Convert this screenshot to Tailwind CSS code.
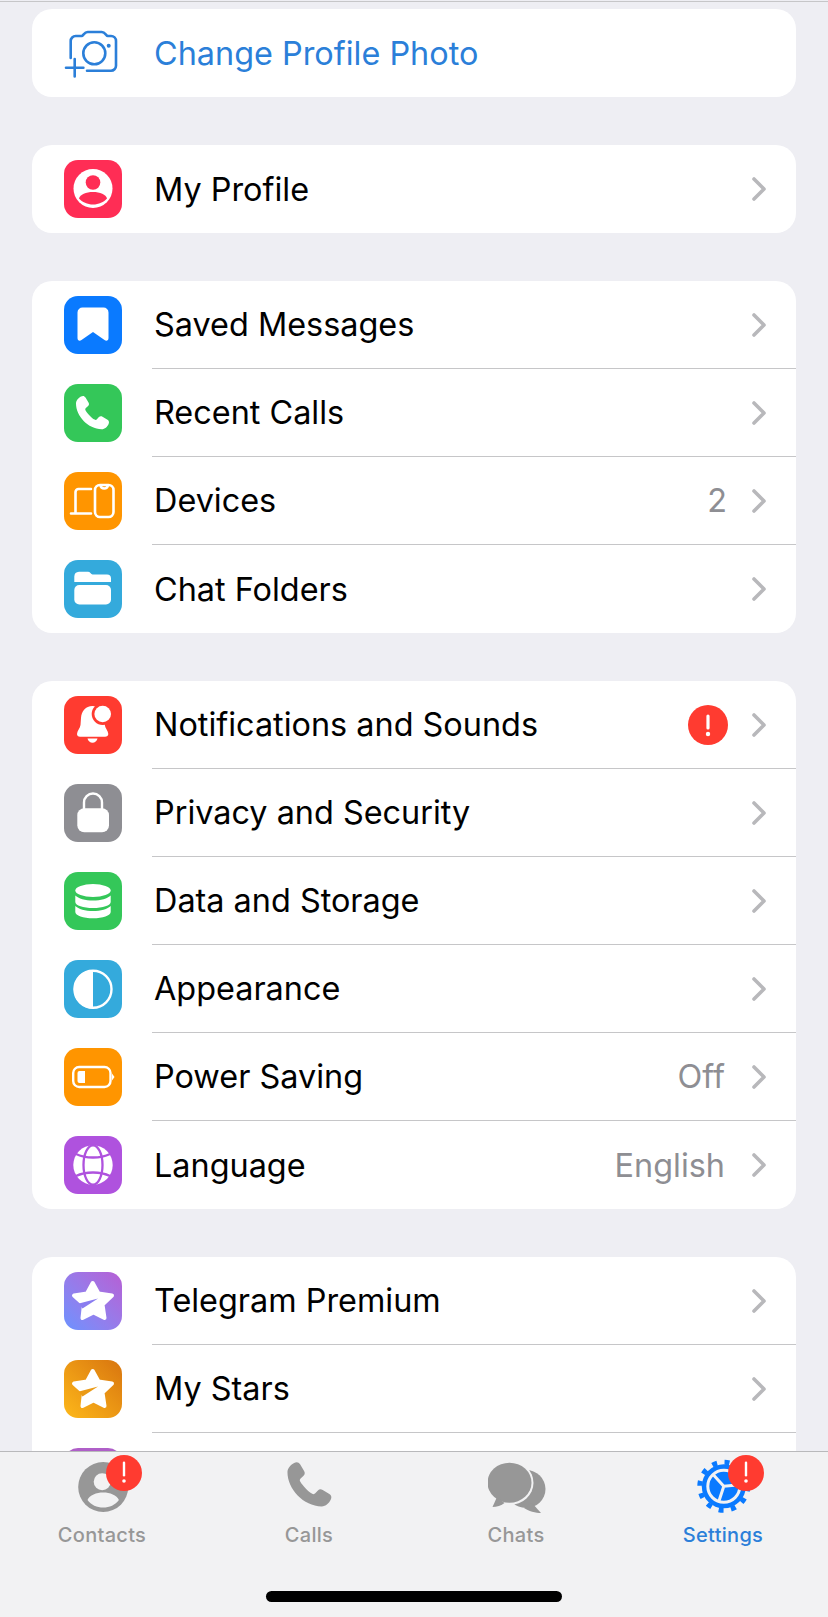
<!DOCTYPE html>
<html lang="en">
<head>
    <meta charset="UTF-8">
    <meta name="viewport" content="width=device-width, initial-scale=1.0">
    <title>Settings</title>
    <script src="https://cdn.jsdelivr.net/npm/@tailwindcss/browser@4"></script>
</head>
<body class="w-[828px] h-[1617px] overflow-hidden flex flex-col bg-[#eeeef3] font-[Inter,sans-serif] text-[32.4px] text-black">

    <main class="h-[1451px] overflow-hidden pt-px">
        <div class="border-t border-[#c6c6c8] h-[8px]"></div>
        <div class="flex flex-col gap-12 px-8">

            <!-- change photo -->
            <section class="bg-white rounded-[20px]">
                <div class="h-[88px] flex items-center pl-8">
                    <svg class="w-[58px] h-[58px] shrink-0" viewBox="0 0 58 58" fill="none" stroke="#2b7fd9" stroke-width="2.6" stroke-linecap="round">
                        <path d="M6.7 34V17a5 5 0 0 1 5-5h6c1.500 0 2.500-4 6-4h14c3.500 0 4.500 4 6 4h3.300a5 5 0 0 1 5 5v24.700a5 5 0 0 1-5 5H23"/>
                        <circle cx="30.300" cy="29.300" r="11"/>
                        <circle cx="44.700" cy="21.700" r="2" fill="#2b7fd9" stroke="none"/>
                        <path d="M10.700 35v17.400M2 43.700h17.400"/>
                    </svg>
                    <span class="ml-8 pt-[2px] text-[#2b7fd9]">Change Profile Photo</span>
                </div>
            </section>

            <!-- profile -->
            <section class="bg-white rounded-[20px]">
                <div class="h-[88px] flex items-center pl-8">
                    <div class="w-[58px] h-[58px] shrink-0 rounded-[14px] bg-[#ff2d55]">
                        <svg viewBox="0 0 58 58" class="w-full h-full">
                            <circle cx="29" cy="28.500" r="19.500" fill="#fff"/>
                            <circle cx="29" cy="22.500" r="7.300" fill="#ff2d55"/>
                            <path d="M15 38.500c1-4 7-6.500 14-6.500s13 2.500 14 6.500c-3 3.500-8.500 6-14 6s-11-2.500-14-6z" fill="#ff2d55"/>
                        </svg>
                    </div>
                    <div class="flex-1 h-full ml-[30px] pl-[2px] pr-[30px] flex items-center">
                        <span class="flex-1 pt-[2px]">My Profile</span>
                        <svg class="w-[14px] h-[24px]" viewBox="0 0 14 24" fill="none" stroke="#b8b8bb" stroke-width="3.600" stroke-linecap="round" stroke-linejoin="round"><path d="M2 2l10 10L2 22"/></svg>
                    </div>
                </div>
            </section>

            <!-- saved, calls, devices, folders -->
            <section class="bg-white rounded-[20px]">
                <div class="h-[88px] flex items-center pl-8">
                    <div class="w-[58px] h-[58px] shrink-0 rounded-[14px] bg-[#0a7aff]">
                        <svg viewBox="0 0 58 58" class="w-full h-full">
                            <path d="M18.500 11.500h21a5 5 0 0 1 5 5V42c0 2.500-2 3.500-4 2l-11.500-8-11.500 8c-2 1.500-4 .5-4-2V16.500a5 5 0 0 1 5-5z" fill="#fff"/>
                        </svg>
                    </div>
                    <div class="flex-1 h-full ml-[30px] pl-[2px] pr-[30px] flex items-center border-b border-[#c6c6c8]">
                        <span class="flex-1 pt-[2px]">Saved Messages</span>
                        <svg class="w-[14px] h-[24px]" viewBox="0 0 14 24" fill="none" stroke="#b8b8bb" stroke-width="3.600" stroke-linecap="round" stroke-linejoin="round"><path d="M2 2l10 10L2 22"/></svg>
                    </div>
                </div>
                <div class="h-[88px] flex items-center pl-8">
                    <div class="w-[58px] h-[58px] shrink-0 rounded-[14px] bg-[#34c759]">
                        <svg viewBox="0 0 58 58" class="w-full h-full">
                            <path d="M17 12.500c2-1 3.500-.5 4.500 1l3 5c.8 1.400.6 2.600-.4 3.600l-2.200 2c-.7.7-.8 1.400-.3 2.300 1.800 3.200 5.800 7.400 9 9.200.9.5 1.700.4 2.300-.3l2-2.200c1-1 2.200-1.200 3.600-.4l5 3c1.500 1 2 2.500 1 4.500-1.200 2.400-3.600 5-6.800 5C24 45 12 32 12 19.500c0-3.200 2.600-5.800 5-7z" fill="#fff"/>
                        </svg>
                    </div>
                    <div class="flex-1 h-full ml-[30px] pl-[2px] pr-[30px] flex items-center border-b border-[#c6c6c8]">
                        <span class="flex-1 pt-[2px]">Recent Calls</span>
                        <svg class="w-[14px] h-[24px]" viewBox="0 0 14 24" fill="none" stroke="#b8b8bb" stroke-width="3.600" stroke-linecap="round" stroke-linejoin="round"><path d="M2 2l10 10L2 22"/></svg>
                    </div>
                </div>
                <div class="h-[88px] flex items-center pl-8">
                    <div class="w-[58px] h-[58px] shrink-0 rounded-[14px] bg-[#ff9500]">
                        <svg viewBox="0 0 58 58" class="w-full h-full" fill="none" stroke="#fff" stroke-width="2.600" stroke-linecap="round" stroke-linejoin="round">
                            <path d="M27 17H14.500a3 3 0 0 0-3 3v21M7 41.500h20"/>
                            <rect x="31" y="13" width="18.500" height="32" rx="5"/>
                            <path d="M36.500 13.500c.5 2.500 1.500 3 3.700 3s3.200-.5 3.700-3"/>
                        </svg>
                    </div>
                    <div class="flex-1 h-full ml-[30px] pl-[2px] pr-[30px] flex items-center border-b border-[#c6c6c8]">
                        <span class="flex-1 pt-[2px]">Devices</span>
                        <span class="mr-[25px] pt-[2px] text-[#8e8e93]">2</span>
                        <svg class="w-[14px] h-[24px]" viewBox="0 0 14 24" fill="none" stroke="#b8b8bb" stroke-width="3.600" stroke-linecap="round" stroke-linejoin="round"><path d="M2 2l10 10L2 22"/></svg>
                    </div>
                </div>
                <div class="h-[88px] flex items-center pl-8">
                    <div class="w-[58px] h-[58px] shrink-0 rounded-[14px] bg-[#34aadc]">
                        <svg viewBox="0 0 58 58" class="w-full h-full" fill="#fff">
                            <path d="M15 11.700h9c2 0 3 2.300 4.500 2.800H43a4 4 0 0 1 4 4V22H10.300v-5.500a5 5 0 0 1 4.700-4.800z"/>
                            <rect x="10.300" y="25" width="36.700" height="19.500" rx="5"/>
                        </svg>
                    </div>
                    <div class="flex-1 h-full ml-[30px] pl-[2px] pr-[30px] flex items-center">
                        <span class="flex-1 pt-[2px]">Chat Folders</span>
                        <svg class="w-[14px] h-[24px]" viewBox="0 0 14 24" fill="none" stroke="#b8b8bb" stroke-width="3.600" stroke-linecap="round" stroke-linejoin="round"><path d="M2 2l10 10L2 22"/></svg>
                    </div>
                </div>
            </section>

            <!-- notifications ... language -->
            <section class="bg-white rounded-[20px]">
                <div class="h-[88px] flex items-center pl-8">
                    <div class="w-[58px] h-[58px] shrink-0 rounded-[14px] bg-[#ff3b30]">
                        <svg viewBox="0 0 58 58" class="w-full h-full" fill="#fff">
                            <path d="M28.500 10c-7 0-11 5-11.500 12l-.5 7c-.2 3-3.500 6-3.500 9 0 1.500 1 2.700 3 2.700h25c2 0 3.300-1.200 3.300-2.700 0-3-3.300-6-3.500-9l-.8-9c-1-6-5.500-10-11.500-10z"/>
                            <circle cx="38.700" cy="18" r="11" fill="#ff3b30"/>
                            <circle cx="38.700" cy="18" r="8.300"/>
                            <path d="M23.500 42.500h10c-.5 2.500-2.700 4.200-5 4.200s-4.500-1.700-5-4.200z"/>
                        </svg>
                    </div>
                    <div class="flex-1 h-full ml-[30px] pl-[2px] pr-[30px] flex items-center border-b border-[#c6c6c8]">
                        <span class="flex-1 pt-[2px]">Notifications and Sounds</span>
                        <div class="mr-[24px] w-10 h-10 rounded-full bg-[#ff3b30]">
                            <svg viewBox="0 0 40 40" class="w-full h-full" fill="#fff"><rect x="18.400" y="9.500" width="3.200" height="15" rx="1.600"/><circle cx="20" cy="29" r="2.200"/></svg>
                        </div>
                        <svg class="w-[14px] h-[24px]" viewBox="0 0 14 24" fill="none" stroke="#b8b8bb" stroke-width="3.600" stroke-linecap="round" stroke-linejoin="round"><path d="M2 2l10 10L2 22"/></svg>
                    </div>
                </div>
                <div class="h-[88px] flex items-center pl-8">
                    <div class="w-[58px] h-[58px] shrink-0 rounded-[14px] bg-[#8e8e93]">
                        <svg viewBox="0 0 58 58" class="w-full h-full">
                            <path d="M20 26v-7.500a9 9 0 0 1 18 0V26" fill="none" stroke="#fff" stroke-width="2.400"/>
                            <rect x="13.300" y="24.300" width="31.700" height="24" rx="7" fill="#fff"/>
                        </svg>
                    </div>
                    <div class="flex-1 h-full ml-[30px] pl-[2px] pr-[30px] flex items-center border-b border-[#c6c6c8]">
                        <span class="flex-1 pt-[2px]">Privacy and Security</span>
                        <svg class="w-[14px] h-[24px]" viewBox="0 0 14 24" fill="none" stroke="#b8b8bb" stroke-width="3.600" stroke-linecap="round" stroke-linejoin="round"><path d="M2 2l10 10L2 22"/></svg>
                    </div>
                </div>
                <div class="h-[88px] flex items-center pl-8">
                    <div class="w-[58px] h-[58px] shrink-0 rounded-[14px] bg-[#34c759]">
                        <svg viewBox="0 0 58 58" class="w-full h-full" fill="#fff">
                            <ellipse cx="29" cy="18.500" rx="17.700" ry="6.500"/>
                            <path d="M11.300 23.500c3 3 10 5 17.700 5s14.700-2 17.700-5V30c0 3.500-8 6-17.700 6s-17.700-2.500-17.700-6z"/>
                            <path d="M11.300 34c3 3 10 5 17.700 5s14.700-2 17.700-5v6c0 3.500-8 6.300-17.700 6.300S11.300 43.500 11.300 40z"/>
                        </svg>
                    </div>
                    <div class="flex-1 h-full ml-[30px] pl-[2px] pr-[30px] flex items-center border-b border-[#c6c6c8]">
                        <span class="flex-1 pt-[2px]">Data and Storage</span>
                        <svg class="w-[14px] h-[24px]" viewBox="0 0 14 24" fill="none" stroke="#b8b8bb" stroke-width="3.600" stroke-linecap="round" stroke-linejoin="round"><path d="M2 2l10 10L2 22"/></svg>
                    </div>
                </div>
                <div class="h-[88px] flex items-center pl-8">
                    <div class="w-[58px] h-[58px] shrink-0 rounded-[14px] bg-[#34aadc]">
                        <svg viewBox="0 0 58 58" class="w-full h-full">
                            <circle cx="29" cy="29.300" r="18.500" fill="none" stroke="#fff" stroke-width="2.400"/>
                            <path d="M29 10a19.300 19.300 0 0 0 0 38.600z" fill="#fff"/>
                        </svg>
                    </div>
                    <div class="flex-1 h-full ml-[30px] pl-[2px] pr-[30px] flex items-center border-b border-[#c6c6c8]">
                        <span class="flex-1 pt-[2px]">Appearance</span>
                        <svg class="w-[14px] h-[24px]" viewBox="0 0 14 24" fill="none" stroke="#b8b8bb" stroke-width="3.600" stroke-linecap="round" stroke-linejoin="round"><path d="M2 2l10 10L2 22"/></svg>
                    </div>
                </div>
                <div class="h-[88px] flex items-center pl-8">
                    <div class="w-[58px] h-[58px] shrink-0 rounded-[14px] bg-[#ff9500]">
                        <svg viewBox="0 0 58 58" class="w-full h-full">
                            <rect x="9.200" y="19" width="37.300" height="20" rx="6" fill="none" stroke="#fff" stroke-width="2.400"/>
                            <path d="M15.500 23H21v12h-5.500a2 2 0 0 1-2-2v-8a2 2 0 0 1 2-2z" fill="#fff"/>
                            <path d="M48 25.500l2.500 3.500-2.500 3.500z" fill="#fff"/>
                        </svg>
                    </div>
                    <div class="flex-1 h-full ml-[30px] pl-[2px] pr-[30px] flex items-center border-b border-[#c6c6c8]">
                        <span class="flex-1 pt-[2px]">Power Saving</span>
                        <span class="mr-[27px] pt-[2px] text-[#8e8e93]">Off</span>
                        <svg class="w-[14px] h-[24px]" viewBox="0 0 14 24" fill="none" stroke="#b8b8bb" stroke-width="3.600" stroke-linecap="round" stroke-linejoin="round"><path d="M2 2l10 10L2 22"/></svg>
                    </div>
                </div>
                <div class="h-[88px] flex items-center pl-8">
                    <div class="w-[58px] h-[58px] shrink-0 rounded-[14px] bg-[#af52de]">
                        <svg viewBox="0 0 58 58" class="w-full h-full">
                            <circle cx="29" cy="29" r="19.700" fill="#fff"/>
                            <g fill="none" stroke="#af52de" stroke-width="2.300">
                                <ellipse cx="29" cy="29" rx="9.500" ry="19.700"/>
                                <path d="M12 18c5 2.500 11 3.500 17 3.500s12-1 17-3.500M12 40c5-2.500 11-3.500 17-3.500s12 1 17 3.500"/>
                            </g>
                        </svg>
                    </div>
                    <div class="flex-1 h-full ml-[30px] pl-[2px] pr-[30px] flex items-center">
                        <span class="flex-1 pt-[2px]">Language</span>
                        <span class="mr-[27px] pt-[2px] text-[#8e8e93]">English</span>
                        <svg class="w-[14px] h-[24px]" viewBox="0 0 14 24" fill="none" stroke="#b8b8bb" stroke-width="3.600" stroke-linecap="round" stroke-linejoin="round"><path d="M2 2l10 10L2 22"/></svg>
                    </div>
                </div>
            </section>

            <!-- premium, stars -->
            <section class="bg-white rounded-[20px]">
                <div class="h-[88px] flex items-center pl-8">
                    <div class="w-[58px] h-[58px] shrink-0 rounded-[14px] bg-linear-to-tr from-[#6a92ff] to-[#b65ed4]">
                        <svg viewBox="0 0 58 58" class="w-full h-full">
                            <path d="M28.700 11l5.800 10.500L48 23.500l-9.500 9L40.500 46 29.500 40.500 18.500 46l1.500-13.500-10-9 13-2z" fill="#fff" stroke="#fff" stroke-width="4" stroke-linejoin="round"/>
                            <path d="M34 26.500L15 31.500l3.500 5z" fill="#8a7cf0"/>
                        </svg>
                    </div>
                    <div class="flex-1 h-full ml-[30px] pl-[2px] pr-[30px] flex items-center border-b border-[#c6c6c8]">
                        <span class="flex-1 pt-[2px]">Telegram Premium</span>
                        <svg class="w-[14px] h-[24px]" viewBox="0 0 14 24" fill="none" stroke="#b8b8bb" stroke-width="3.600" stroke-linecap="round" stroke-linejoin="round"><path d="M2 2l10 10L2 22"/></svg>
                    </div>
                </div>
                <div class="h-[88px] flex items-center pl-8">
                    <div class="w-[58px] h-[58px] shrink-0 rounded-[14px] bg-linear-to-tr from-[#fdb81a] to-[#d8750f]">
                        <svg viewBox="0 0 58 58" class="w-full h-full">
                            <path d="M28.700 11l5.800 10.500L48 23.500l-9.500 9L40.500 46 29.500 40.500 18.500 46l1.500-13.500-10-9 13-2z" fill="#fff" stroke="#fff" stroke-width="4" stroke-linejoin="round"/>
                            <path d="M34 26.500L15 31.500l3.500 5z" fill="#ea9a16"/>
                        </svg>
                    </div>
                    <div class="flex-1 h-full ml-[30px] pl-[2px] pr-[30px] flex items-center border-b border-[#c6c6c8]">
                        <span class="flex-1 pt-[2px]">My Stars</span>
                        <svg class="w-[14px] h-[24px]" viewBox="0 0 14 24" fill="none" stroke="#b8b8bb" stroke-width="3.600" stroke-linecap="round" stroke-linejoin="round"><path d="M2 2l10 10L2 22"/></svg>
                    </div>
                </div>
                <div class="h-[88px] flex items-center pl-8">
                    <div class="w-[58px] h-[58px] shrink-0 rounded-[14px] bg-[#af5fc8]"></div>
                </div>
            </section>
        </div>
    </main>

    <!-- tab bar -->
    <nav class="relative h-[166px] bg-[#f2f2f3] border-t border-[#b9b9bb] grid grid-cols-4 pt-[5px] text-[20px] font-medium text-[#979797]">
        <div class="flex flex-col items-center">
            <div class="relative w-[60px] h-[60px]">
                <svg viewBox="0 0 60 60" class="w-full h-full">
                    <circle cx="29.200" cy="30" r="25" fill="#979797"/>
                    <circle cx="28.200" cy="24.700" r="8.500" fill="#f2f2f3"/>
                    <path d="M13.500 43c2-5 9-7.500 15.700-7.500s13.700 2.500 15.700 7.500c-3.500 5-9.500 7.500-15.700 7.500s-12.200-2.500-15.700-7.500z" fill="#f2f2f3"/>
                </svg>
                <div class="absolute left-[32px] top-[-2px] w-9 h-9 rounded-full bg-[#ff3b30]">
                    <svg viewBox="0 0 36 36" class="w-full h-full" fill="#fff"><rect x="16.800" y="6.500" width="2.400" height="15" rx="1.200"/><circle cx="18" cy="26" r="1.800"/></svg>
                </div>
            </div>
            <span class="mt-[3px] ml-[-3px] tracking-[0.3px]">Contacts</span>
        </div>
        <div class="flex flex-col items-center">
            <svg viewBox="0 0 60 60" class="w-[60px] h-[60px]">
                <path transform="translate(-9.500 -10.600) scale(1.330)" d="M17 12.500c2-1 3.500-.5 4.500 1l3 5c.8 1.400.6 2.600-.4 3.600l-2.200 2c-.7.7-.8 1.400-.3 2.300 1.800 3.200 5.800 7.400 9 9.200.9.5 1.700.4 2.300-.3l2-2.200c1-1 2.200-1.200 3.600-.4l5 3c1.500 1 2 2.500 1 4.500-1.200 2.400-3.600 5-6.800 5C24 45 12 32 12 19.500c0-3.200 2.600-5.800 5-7z" fill="#979797"/>
            </svg>
            <span class="mt-[3px] ml-[-3px] tracking-[0.3px]">Calls</span>
        </div>
        <div class="flex flex-col items-center">
            <svg viewBox="0 0 60 60" class="w-[60px] h-[60px]">
                <ellipse cx="38" cy="32" rx="19.500" ry="19" fill="#979797"/>
                <path d="M44 46l9 10c-5 0-13-2-17-5z" fill="#979797"/>
                <ellipse cx="21.500" cy="25.700" rx="24" ry="22.200" fill="#f2f2f3"/>
                <ellipse cx="21.500" cy="25.700" rx="22" ry="20" fill="#979797"/>
                <path d="M9 40l-4.500 10c4 0 9-1.500 12-4z" fill="#979797"/>
            </svg>
            <span class="mt-[3px] ml-[-3px] tracking-[0.3px]">Chats</span>
        </div>
        <div class="flex flex-col items-center text-[#2b7fd9]">
            <div class="relative w-[60px] h-[60px]">
                <svg viewBox="0 0 60 60" class="w-full h-full" fill="none">
                    <circle cx="28.800" cy="29.300" r="24" stroke="#0a7aff" stroke-width="5" stroke-dasharray="5 7.570"/>
                    <circle cx="28.800" cy="29.300" r="22" fill="#0a7aff"/>
                    <circle cx="28.800" cy="29.300" r="16" stroke="#f2f2f3" stroke-width="3"/>
                    <path d="M28.800 29.300L18.100 17.400M28.800 29.300L44.700 27.700M28.800 29.300L23.800 44.500" stroke="#f2f2f3" stroke-width="3"/>
                </svg>
                <div class="absolute left-[33px] top-[-2px] w-9 h-9 rounded-full bg-[#ff3b30]">
                    <svg viewBox="0 0 36 36" class="w-full h-full" fill="#fff"><rect x="16.800" y="6.500" width="2.400" height="15" rx="1.200"/><circle cx="18" cy="26" r="1.800"/></svg>
                </div>
            </div>
            <span class="mt-[3px] ml-[-3px] tracking-[0.3px]">Settings</span>
        </div>
        <div class="absolute left-[266px] top-[139px] w-[296px] h-[11px] rounded-full bg-black"></div>
    </nav>

</body>
</html>
